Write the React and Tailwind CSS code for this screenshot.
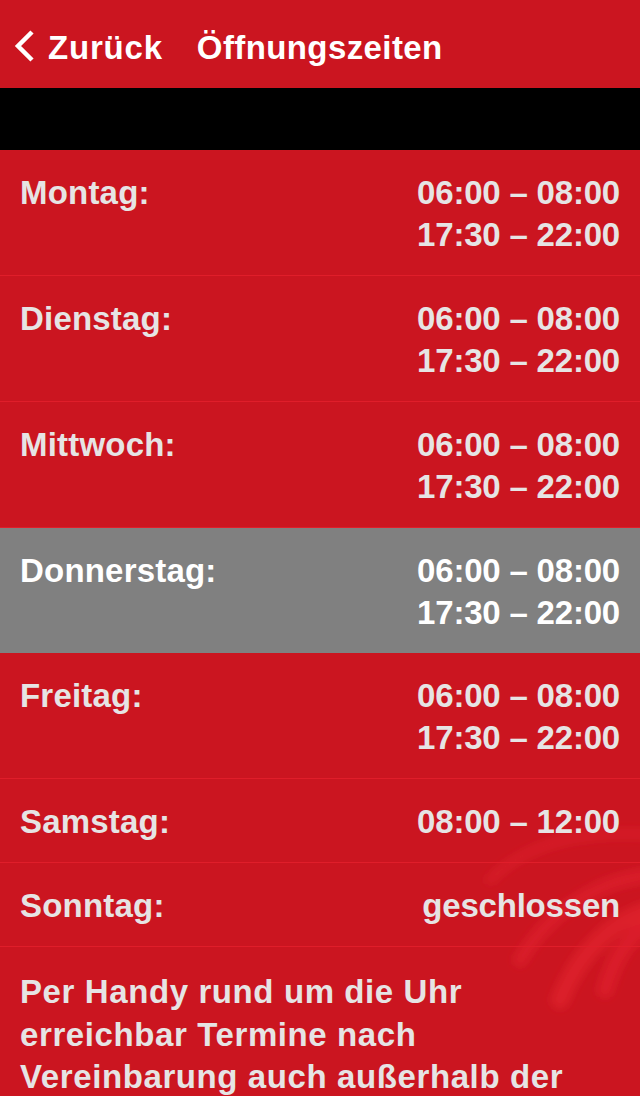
const hours = [
  { day: "Montag:", times: ["06:00 – 08:00", "17:30 – 22:00"] },
  { day: "Dienstag:", times: ["06:00 – 08:00", "17:30 – 22:00"] },
  { day: "Mittwoch:", times: ["06:00 – 08:00", "17:30 – 22:00"] },
  { day: "Donnerstag:", times: ["06:00 – 08:00", "17:30 – 22:00"], today: true },
  { day: "Freitag:", times: ["06:00 – 08:00", "17:30 – 22:00"] },
  { day: "Samstag:", times: ["08:00 – 12:00"] },
  { day: "Sonntag:", times: ["geschlossen"] },
];

function Swoosh() {
  // faint light streaks bottom right of the red background
  return (
    <svg className="pointer-events-none absolute right-0 top-[760px]" width="160" height="280" viewBox="0 0 160 280">
      <defs>
        <filter id="blur" x="-50%" y="-50%" width="200%" height="200%">
          <feGaussianBlur stdDeviation="5" />
        </filter>
      </defs>
      <g filter="url(#blur)" fill="none" stroke="#ff3340" strokeLinecap="round">
        <path d="M10 120 C 50 80, 110 70, 170 75" strokeWidth="10" opacity="0.22" />
        <path d="M40 200 C 70 150, 120 120, 170 115" strokeWidth="14" opacity="0.28" />
        <path d="M80 240 C 100 190, 135 160, 170 150" strokeWidth="18" opacity="0.32" />
        <path d="M125 230 C 135 195, 150 175, 170 165" strokeWidth="16" opacity="0.3" />
      </g>
    </svg>
  );
}

export default function App() {
  return (
    <div className="relative h-[1096px] w-[640px] overflow-hidden bg-[#cb1520] font-['Liberation_Sans',Arial,sans-serif] text-[#e6e4e4]">
      <Swoosh />

      {/* Header */}
      <div className="relative flex h-[88px] items-center bg-[#cb1520] pt-[8px] text-white">
        <svg className="ml-[13px] mr-[11px] -mt-[4px]" width="24" height="34" viewBox="0 0 24 34">
          <polyline points="19,3 5,17 19,31" fill="none" stroke="white" strokeWidth="4.5" strokeLinecap="butt" strokeLinejoin="miter" />
        </svg>
        <span className="text-[33px] font-bold tracking-[0.8px]">Zurück</span>
        <span className="ml-[34px] text-[33px] font-bold tracking-[0.4px]">Öffnungszeiten</span>
      </div>

      <div className="h-[62px] bg-black" />

      {/* Hours */}
      <div className="relative">
        {hours.map((h) => (
          <div
            key={h.day}
            className={`flex justify-between px-[20px] pb-[19px] pt-[22px] text-[33px] font-bold leading-[42px] ${
              h.today ? "bg-[#808080] text-white" : "border-b border-[#e01e2a]"
            }`}
          >
            <span className="tracking-[0.2px]">{h.day}</span>
            <div className="text-left tracking-[-0.2px]">
              {h.times.map((t) => (
                <div key={t}>{t}</div>
              ))}
            </div>
          </div>
        ))}

        <p className="px-[20px] pt-[24px] text-[33px] font-bold leading-[42.5px] tracking-[0.6px]">
          Per Handy rund um die Uhr
          <br />
          erreichbar Termine nach
          <br />
          Vereinbarung auch außerhalb der
        </p>
      </div>
    </div>
  );
}
